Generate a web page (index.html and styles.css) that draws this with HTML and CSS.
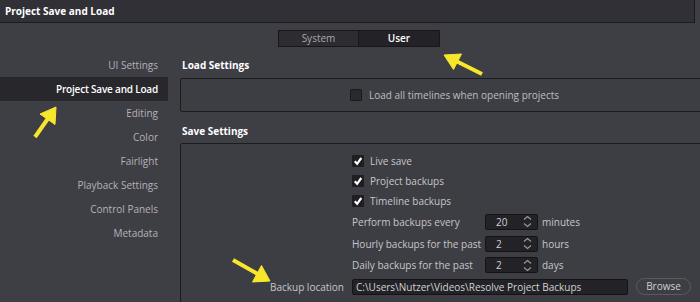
FILE: index.html
```html
<!DOCTYPE html>
<html>
<head>
<meta charset="utf-8">
<link rel="stylesheet" href="styles.css">
</head>
<body>
<div class="titlebar">Project Save and Load</div>
<div class="tabs">
  <div class="tab">System</div>
  <div class="tab active">User</div>
</div>
<div class="layout">
  <nav class="sidebar">
    <div class="nav-item">UI Settings</div>
    <div class="nav-item selected">Project Save and Load</div>
    <div class="nav-item">Editing</div>
    <div class="nav-item">Color</div>
    <div class="nav-item">Fairlight</div>
    <div class="nav-item">Playback Settings</div>
    <div class="nav-item">Control Panels</div>
    <div class="nav-item">Metadata</div>
  </nav>
  <main class="main">
    <div class="heading first">Load Settings</div>
    <div class="box load-box">
      <label class="check-row"><span class="checkbox"></span><span>Load all timelines when opening projects</span></label>
    </div>
    <div class="heading">Save Settings</div>
    <div class="box save-box">
      <div class="row check"><div class="lead"></div><div class="cell"><span class="checkbox on"><svg viewBox="0 0 12 12" width="12" height="12"><path d="M2.8 6.3 L5.1 8.8 L9.3 3" fill="none" stroke="#fff" stroke-width="2.2"/></svg></span><span>Live save</span></div></div>
      <div class="row check"><div class="lead"></div><div class="cell"><span class="checkbox on"><svg viewBox="0 0 12 12" width="12" height="12"><path d="M2.8 6.3 L5.1 8.8 L9.3 3" fill="none" stroke="#fff" stroke-width="2.2"/></svg></span><span>Project backups</span></div></div>
      <div class="row check"><div class="lead"></div><div class="cell"><span class="checkbox on"><svg viewBox="0 0 12 12" width="12" height="12"><path d="M2.8 6.3 L5.1 8.8 L9.3 3" fill="none" stroke="#fff" stroke-width="2.2"/></svg></span><span>Timeline backups</span></div></div>
      <div class="row spin"><div class="lead"></div><div class="cell"><span class="spin-label">Perform backups every</span><span class="spinner"><span class="num">20</span><svg class="chev" viewBox="0 0 9 13" width="9" height="13"><path d="M1 4.5 L4.5 1.5 L8 4.5 M1 8.5 L4.5 11.5 L8 8.5" fill="none" stroke="#9a9aa0" stroke-width="1.1"/></svg></span><span class="unit">minutes</span></div></div>
      <div class="row spin"><div class="lead"></div><div class="cell"><span class="spin-label">Hourly backups for the past</span><span class="spinner"><span class="num">2</span><svg class="chev" viewBox="0 0 9 13" width="9" height="13"><path d="M1 4.5 L4.5 1.5 L8 4.5 M1 8.5 L4.5 11.5 L8 8.5" fill="none" stroke="#9a9aa0" stroke-width="1.1"/></svg></span><span class="unit">hours</span></div></div>
      <div class="row spin"><div class="lead"></div><div class="cell"><span class="spin-label">Daily backups for the past</span><span class="spinner"><span class="num">2</span><svg class="chev" viewBox="0 0 9 13" width="9" height="13"><path d="M1 4.5 L4.5 1.5 L8 4.5 M1 8.5 L4.5 11.5 L8 8.5" fill="none" stroke="#9a9aa0" stroke-width="1.1"/></svg></span><span class="unit">days</span></div></div>
      <div class="row spin"><div class="lead">Backup location</div><div class="cell"><span class="path">C:\Users\Nutzer\Videos\Resolve Project Backups</span><span class="browse">Browse</span></div></div>
    </div>
  </main>
</div>
<svg class="arrows" width="700" height="302" viewBox="0 0 700 302">
  <g fill="#f7e62b" stroke="#f7e62b">
    <line x1="482" y1="74" x2="455" y2="60.5" stroke-width="4"/>
    <polygon points="444,55 461.5,54 453.5,69.5" stroke-width="1"/>
    <line x1="35" y1="137" x2="49" y2="117" stroke-width="4"/>
    <polygon points="56,107 55,124.5 40,114" stroke-width="1"/>
    <line x1="233" y1="260" x2="259" y2="274.7" stroke-width="4"/>
    <polygon points="270,281 252.5,282 261.5,265.5" stroke-width="1"/>
  </g>
</svg>
</body>
</html>
```
FILE: styles.css
```css
* { box-sizing: border-box; }
html, body {
  margin: 0;
  padding: 0;
}
body {
  width: 700px;
  height: 302px;
  overflow: hidden;
  background: #3e3e45;
  font-family: "Open Sans", "Noto Sans", sans-serif;
  font-size: 10px;
  color: #c6c6cb;
  position: relative;
}
.titlebar {
  height: 23px;
  line-height: 22px;
  padding-left: 5px;
  background: #303036;
  border-bottom: 1px solid #1c1c20;
  border-right: 1px solid #1c1c20;
  width: 695px;
  color: #fff;
  font-weight: 700;
  font-size: 10px;
}
.tabs {
  display: flex;
  margin-top: 7px;
  margin-left: 278px;
}
.tab {
  width: 81px;
  height: 17px;
  line-height: 15px;
  text-align: center;
  background: #2c2c31;
  border: 1px solid #18181b;
  color: #a9a9ae;
}
.tab.active {
  background: #232327;
  color: #fff;
  font-weight: 600;
  border-left: none;
}
.layout {
  display: flex;
  margin-top: 6px;
}
.sidebar {
  width: 168px;
  flex: none;
}
.nav-item {
  height: 24px;
  line-height: 24px;
  text-align: right;
  padding-right: 10px;
  color: #b3b3b8;
}
.nav-item.selected {
  background: #28282c;
  color: #fff;
  font-weight: 600;
  letter-spacing: -0.2px;
}
.main {
  margin-left: 12px;
  flex: 1;
  margin-right: -30px;
}
.heading {
  color: #fff;
  font-weight: 700;
  padding-left: 2px;
  height: 31px;
  padding-top: 9px;
  line-height: 20px;
}
.heading.first {
  height: 25px;
  padding-top: 0;
  line-height: 25px;
}
.box {
  border: 1px solid #1c1c1f;
  border-radius: 2px;
  background: #3d3d44;
}
.load-box {
  height: 34px;
  padding-left: 169px;
  display: flex;
  align-items: center;
}
.check-row {
  display: flex;
  align-items: center;
  gap: 7px;
  color: #bdbdc2;
}
.checkbox {
  width: 12px;
  height: 12px;
  flex: none;
  background: #2a2a2e;
  border: 1px solid #1a1a1d;
  border-radius: 1px;
}
.checkbox.on {
  background: #1f1f22;
  border: none;
}
.checkbox svg { display: block; }
.save-box {
  height: 160px;
  padding-top: 6px;
}
.row {
  display: grid;
  grid-template-columns: 171px 1fr;
  align-items: center;
}
.row.check { height: 20px; }
.row.spin { height: 21.7px; }
.row.check:first-child { height: 21px; }
.lead {
  text-align: right;
  padding-right: 8px;
  color: #c6c6cb;
}
.cell {
  display: flex;
  align-items: center;
}
.row.check .cell { gap: 6px; }
.spin-label {
  width: 133px;
  flex: none;
}
.spinner {
  width: 53px;
  height: 16px;
  flex: none;
  display: flex;
  align-items: center;
  justify-content: space-between;
  background: #232327;
  border: 1px solid #141416;
  border-radius: 2px;
  padding: 0 5px 0 10px;
  color: #d2d2d6;
}
.chev { display: block; }
.unit {
  margin-left: 4px;
}
.path {
  width: 276px;
  height: 16px;
  line-height: 14px;
  background: #232327;
  border: 1px solid #141416;
  border-radius: 2px;
  padding-left: 3px;
  color: #d2d2d6;
  flex: none;
}
.browse {
  margin-left: 8px;
  width: 55px;
  height: 17px;
  line-height: 15px;
  border: 1px solid #5a5a61;
  border-radius: 9px;
  text-align: center;
  color: #cfcfd3;
  flex: none;
}
.arrows {
  position: absolute;
  left: 0;
  top: 0;
  pointer-events: none;
}
```
